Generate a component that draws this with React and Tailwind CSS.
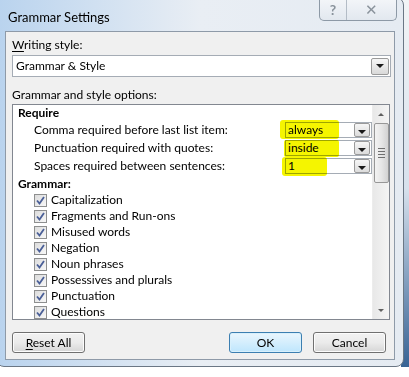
const font = { fontFamily: 'Lato, "Noto Sans", sans-serif' };

const checks = [
  "Capitalization",
  "Fragments and Run-ons",
  "Misused words",
  "Negation",
  "Noun phrases",
  "Possessives and plurals",
  "Punctuation",
  "Questions",
];

const requireRows = [
  { label: "Comma required before last list item:", value: "always", hl: "left-[-5px] w-[59px] top-[-2px] h-[19px] rounded-[3px]" },
  { label: "Punctuation required with quotes:", value: "inside", hl: "left-[-1px] w-[55px] top-[0px] h-[17px] rounded-[2px]" },
  { label: "Spaces required between sentences:", value: "1", hl: "left-[-3px] w-[45px] top-[-1px] h-[19px] rounded-[3px]" },
];

function DropArrow() {
  return (
    <div className="w-[16px] h-[14px] mr-px border border-[#9a9a9a] rounded-[2px] bg-gradient-to-b from-[#f6f6f6] to-[#dcdcdc] flex items-end justify-center pb-[2px]">
      <div className="w-0 h-0 border-l-[4px] border-r-[4px] border-t-[4px] border-l-transparent border-r-transparent border-t-[#1a1a1a]" />
    </div>
  );
}

function SmallSelect({ value, hl }) {
  return (
    <div className="relative w-[87px] h-[16px]">
      <div className="h-full border border-[#a5acb5] bg-white flex items-center justify-between">
        <span className="pl-[2px] text-[12px] leading-none text-black">{value}</span>
        <DropArrow />
      </div>
      <div className={`absolute bg-[#f5f500] mix-blend-multiply ${hl}`} />
    </div>
  );
}

function Checkbox() {
  return (
    <div className="w-[13px] h-[13px] border border-[#8e8f8f] bg-gradient-to-br from-[#dcdcdc] to-[#f8f8f8] flex items-center justify-center">
      <svg width="9" height="9" viewBox="0 0 9 9">
        <path d="M1 4.5 L3.5 7.5 L8 1" fill="none" stroke="#4a5f97" strokeWidth="1.8" />
      </svg>
    </div>
  );
}

function Button({ children, primary }) {
  return (
    <div
      className={`w-[73px] h-[21px] rounded-[3px] border flex items-center justify-center text-[12px] text-black ${
        primary
          ? "border-[#3c7fb1] bg-gradient-to-b from-[#eaf6fd] to-[#bee6fd] shadow-[inset_0_0_0_1px_#d8f0fc]"
          : "border-[#707070] bg-gradient-to-b from-[#f2f2f2] via-[#ebebeb] to-[#d6d6d6] shadow-[inset_0_0_0_1px_#fcfcfc]"
      }`}
    >
      {children}
    </div>
  );
}

export default function App() {
  return (
    <div className="w-[409px] h-[377px] overflow-hidden bg-white relative flex" style={font}>
      {/* desktop strip at right */}
      <div className="absolute right-0 top-0 w-[8px] h-[377px] bg-gradient-to-b from-[#f2f4f6] via-[#d7e1ec] to-[#2f5d8f]" />
      <div className="absolute right-0 top-[367px] w-[409px] h-[10px] bg-white" />

      {/* dialog window */}
      <div className="relative ml-[-4px] mt-[-3px] w-[408px] h-[370px] rounded-[8px] border border-[#6b7785] bg-gradient-to-r from-[#b9d3ee] via-[#e9eef4] to-[#e5ebf2] flex flex-col px-[8px] pb-[6px]">
        {/* title bar */}
        <div className="h-[33px] flex items-center justify-between shrink-0">
          <span className="pl-[3px] pt-[6px] text-[13px] text-black">Grammar Settings</span>
          <div className="self-start flex mr-[-2px] h-[23px] border border-t-0 border-[#8d99a6] rounded-b-[5px] bg-gradient-to-b from-[#f4f6f9] to-[#e2e8ef] overflow-hidden">
            <div className="w-[27px] flex items-center justify-center border-r border-[#b3bcc6] text-[14px] text-[#8a939c] font-bold">?</div>
            <div className="w-[49px] flex items-center justify-center text-[15px] text-[#8a939c]">✕</div>
          </div>
        </div>

        {/* client area */}
        <div className="flex-1 bg-[#f0f0f0] border border-[#8e9aa8] flex flex-col px-[6px] text-[12px] text-black">
          <div className="mt-[5px] leading-[16px]">
            <span className="underline underline-offset-2">W</span>riting style:
          </div>
          <div className="mt-[2px] h-[22px] w-[379px] border border-[#a5acb5] bg-white flex items-center justify-between">
            <span className="pl-[3px]">Grammar &amp; Style</span>
            <div className="mr-[1px] w-[18px] h-[17px] border border-[#9a9a9a] rounded-[2px] bg-gradient-to-b from-[#f6f6f6] to-[#d9d9d9] flex items-center justify-center">
              <div className="w-0 h-0 border-l-[4px] border-r-[4px] border-t-[4px] border-l-transparent border-r-transparent border-t-[#1a1a1a]" />
            </div>
          </div>

          <div className="mt-[10px] leading-[16px]">Grammar and style options:</div>

          {/* options list */}
          <div className="mt-[1px] h-[216px] w-[378px] border border-[#828790] bg-white flex overflow-hidden">
            <div className="flex-1 flex flex-col">
              <div className="h-[16px] pl-[5px] font-bold leading-[16px]">Require</div>
              {requireRows.map((r) => (
                <div key={r.label} className="h-[18px] flex items-center justify-between pl-[21px]">
                  <span>{r.label}</span>
                  <SmallSelect value={r.value} hl={r.hl} />
                </div>
              ))}
              <div className="h-[17px] pl-[5px] font-bold leading-[17px]">Grammar:</div>
              {checks.map((c) => (
                <div key={c} className="h-[16px] flex items-center pl-[21px] gap-[4px] shrink-0">
                  <Checkbox />
                  <span>{c}</span>
                </div>
              ))}
            </div>
            {/* scrollbar */}
            <div className="w-[17px] bg-gradient-to-r from-[#e8e8e8] to-[#f4f4f4] border-l border-[#ececec] flex flex-col items-center">
              <div className="h-[18px] flex items-center justify-center">
                <div className="w-0 h-0 border-l-[3px] border-r-[3px] border-b-[3px] border-l-transparent border-r-transparent border-b-[#606060]" />
              </div>
              <div className="w-[15px] h-[60px] rounded-[2px] border border-[#979797] bg-gradient-to-r from-[#f3f3f3] via-[#e6e6e6] to-[#d2d2d2] flex flex-col items-center justify-center gap-[2px]">
                <div className="w-[7px] h-px bg-[#6f6f6f]" />
                <div className="w-[7px] h-px bg-[#6f6f6f]" />
                <div className="w-[7px] h-px bg-[#6f6f6f]" />
                <div className="w-[7px] h-px bg-[#6f6f6f]" />
              </div>
              <div className="flex-1" />
              <div className="h-[18px] flex items-center justify-center">
                <div className="w-0 h-0 border-l-[3px] border-r-[3px] border-t-[3px] border-l-transparent border-r-transparent border-t-[#606060]" />
              </div>
            </div>
          </div>

          {/* buttons */}
          <div className="mt-[12px] flex items-center">
            <Button>
              <span>
                <span className="underline underline-offset-2">R</span>eset All
              </span>
            </Button>
            <div className="flex-1" />
            <Button primary>OK</Button>
            <div className="w-[11px]" />
            <Button>Cancel</Button>
            <div className="w-[2px]" />
          </div>
        </div>
      </div>
    </div>
  );
}
